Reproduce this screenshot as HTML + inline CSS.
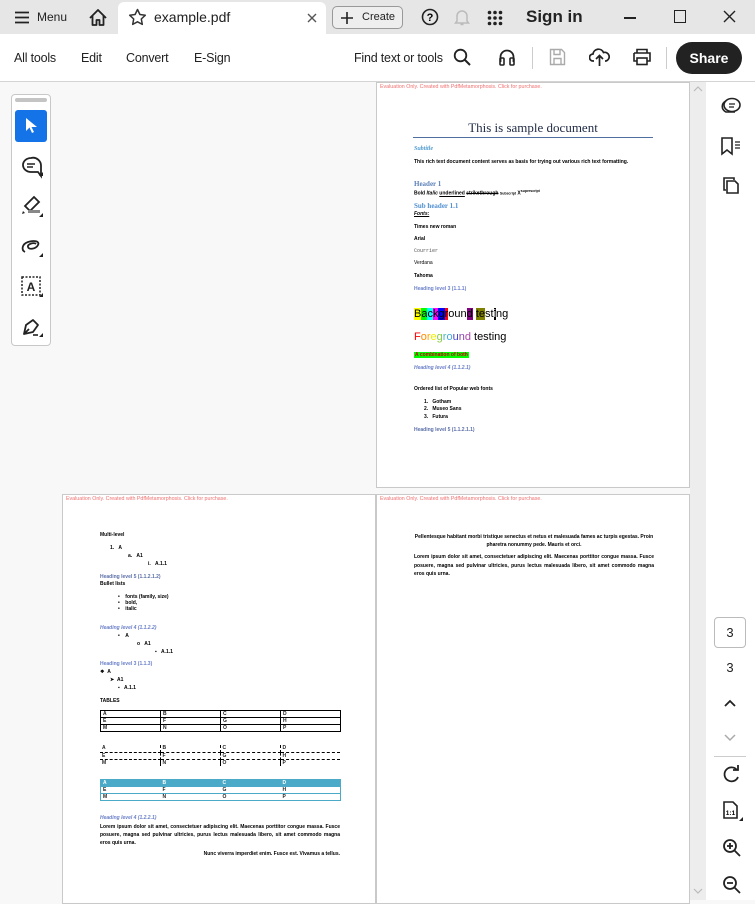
<!DOCTYPE html>
<html><head><meta charset="utf-8"><style>
*{margin:0;padding:0;box-sizing:border-box}
body{width:755px;height:900px;overflow:hidden;position:relative;background:#f8f8f8;font-family:"Liberation Sans",sans-serif;color:#222}
.a{position:absolute;white-space:nowrap}
.top{position:absolute;left:0;top:0;width:755px;height:34px;background:#e6e6e6}
.tab{position:absolute;left:118px;top:2px;width:208px;height:32px;background:#fff;border-radius:6px 6px 0 0}
.bar{position:absolute;left:0;top:34px;width:755px;height:48px;background:#fff;border-bottom:1px solid #d4d4d4}
.t15{font-size:12.5px;color:#222;letter-spacing:-0.2px}
.page{position:absolute;background:#fff;border:1px solid #c9c9c9;overflow:hidden}
.ev{position:absolute;left:3px;top:1px;font-size:5.3px;color:#f07070;white-space:nowrap}
.d{position:absolute;white-space:nowrap;font-size:5px;color:#000;font-weight:bold}
.h{color:#5b7fb8;font-family:"Liberation Serif",serif;font-weight:bold}
.hi{color:#6a7fc8;font-style:italic;font-weight:bold}
.rp{position:absolute;left:706px;top:82px;width:49px;height:818px;background:#fff}
.sb{position:absolute;left:690px;top:82px;width:16px;height:818px;background:#ededed}
table{border-collapse:collapse;position:absolute;font-size:5px;font-weight:bold}
td{width:60px;height:7px;padding:0 2px;line-height:6px}
</style></head><body>
<div class="top"></div>
<div class="tab"></div>
<svg class="a" style="left:14px;top:11px" width="16" height="13"><path d="M1 1.5h14M1 6.5h14M1 11.5h14" stroke="#222" stroke-width="1.8"/></svg>
<div class="a" style="left:37px;top:10px;font-size:12px">Menu</div>
<svg class="a" style="left:88px;top:8px" width="20" height="19"><path d="M2 10L10 2l8 8M4.5 8v9h4v-5h3v5h4V8" fill="none" stroke="#222" stroke-width="1.8" stroke-linejoin="round"/></svg>
<svg class="a" style="left:128px;top:8px" width="19" height="18"><path d="M9.5 1.5l2.4 5 5.4.7-4 3.8 1 5.4-4.8-2.6-4.8 2.6 1-5.4-4-3.8 5.4-.7z" fill="none" stroke="#333" stroke-width="1.5" stroke-linejoin="round"/></svg>
<div class="a" style="left:154px;top:9px;font-size:14px">example.pdf</div>
<svg class="a" style="left:307px;top:13px" width="10" height="10"><path d="M1 1l8 8M9 1l-8 8" stroke="#555" stroke-width="1.4"/></svg>
<div class="a" style="left:332px;top:6px;width:71px;height:23px;border:1px solid #999;border-radius:5px;background:#eee"></div>
<svg class="a" style="left:341px;top:12px" width="12" height="12"><path d="M6 0v12M0 6h12" stroke="#222" stroke-width="1.6"/></svg>
<div class="a" style="left:362px;top:11px;font-size:11px">Create</div>
<svg class="a" style="left:421px;top:8px" width="18" height="18"><circle cx="9" cy="9" r="7.5" fill="none" stroke="#222" stroke-width="1.6"/><text x="9" y="13" font-size="11" font-weight="bold" text-anchor="middle" font-family="Liberation Sans">?</text></svg>
<svg class="a" style="left:454px;top:8px" width="16" height="19"><path d="M3 13V8a5 5 0 0110 0v5l1.5 2h-13zM6.5 16.5h3" fill="none" stroke="#bbb" stroke-width="1.5"/></svg>
<svg class="a" style="left:487px;top:10px" width="16" height="16" fill="#222"><circle cx="2.5" cy="2.5" r="1.8"/><circle cx="8" cy="2.5" r="1.8"/><circle cx="13.5" cy="2.5" r="1.8"/><circle cx="2.5" cy="8" r="1.8"/><circle cx="8" cy="8" r="1.8"/><circle cx="13.5" cy="8" r="1.8"/><circle cx="2.5" cy="13.5" r="1.8"/><circle cx="8" cy="13.5" r="1.8"/><circle cx="13.5" cy="13.5" r="1.8"/></svg>
<div class="a" style="left:526px;top:7px;font-size:17px;font-weight:bold">Sign in</div>
<div class="a" style="left:624px;top:17px;width:12px;height:2px;background:#222"></div>
<div class="a" style="left:674px;top:10px;width:12px;height:13px;border:1.5px solid #222"></div>
<svg class="a" style="left:723px;top:10px" width="13" height="13"><path d="M1 1l11 11M12 1L1 12" stroke="#222" stroke-width="1.4"/></svg>
<div class="bar"></div>
<div class="a t15" style="left:14px;top:51px">All tools</div>
<div class="a t15" style="left:81px;top:51px">Edit</div>
<div class="a t15" style="left:126px;top:51px">Convert</div>
<div class="a t15" style="left:194px;top:51px">E-Sign</div>
<div class="a t15" style="left:354px;top:51px">Find text or tools</div>
<svg class="a" style="left:453px;top:48px" width="18" height="18"><circle cx="7.5" cy="7.5" r="5.8" fill="none" stroke="#222" stroke-width="1.8"/><path d="M12 12l5 5" stroke="#222" stroke-width="2"/></svg>
<svg class="a" style="left:498px;top:48px" width="18" height="18"><path d="M2.5 14V9a6.5 6.5 0 0113 0v5" fill="none" stroke="#222" stroke-width="1.8"/><rect x="2" y="10" width="4" height="7" rx="1" fill="none" stroke="#222" stroke-width="1.6"/><rect x="12" y="10" width="4" height="7" rx="1" fill="none" stroke="#222" stroke-width="1.6"/></svg>
<div class="a" style="left:532px;top:47px;width:1px;height:22px;background:#ccc"></div>
<svg class="a" style="left:549px;top:48px" width="17" height="18"><path d="M1.5 1.5h11l3 3v12h-14z M5 1.5v5h6v-5M5 16.5v-6h7v6" fill="none" stroke="#aaa" stroke-width="1.4"/></svg>
<svg class="a" style="left:589px;top:47px" width="21" height="20"><path d="M5 14H4a3.5 3.5 0 010-7 5.5 5.5 0 0110.5-1.5A4 4 0 0117 14h-1" fill="none" stroke="#222" stroke-width="1.7"/><path d="M10.5 19V9M7 12l3.5-3.5L14 12" fill="none" stroke="#222" stroke-width="1.7"/></svg>
<svg class="a" style="left:632px;top:48px" width="20" height="18"><path d="M5 5V1.5h10V5M2 5h16v8h-3M5 13H2V5" fill="none" stroke="#222" stroke-width="1.6"/><rect x="5" y="10" width="10" height="6.5" fill="none" stroke="#222" stroke-width="1.6"/></svg>
<div class="a" style="left:666px;top:47px;width:1px;height:22px;background:#ccc"></div>
<div class="a" style="left:676px;top:42px;width:66px;height:32px;border-radius:16px;background:#222;color:#fff;font-size:14px;font-weight:bold;text-align:center;line-height:32px">Share</div>

<div class="a" style="left:11px;top:94px;width:40px;height:252px;border:1px solid #c8c8c8;border-radius:4px;background:#fff"></div>
<div class="a" style="left:15px;top:98px;width:32px;height:4px;border-radius:2px;background:#c4c4c4"></div>
<div class="a" style="left:15px;top:110px;width:32px;height:32px;border-radius:3px;background:#1473e6"></div>
<svg class="a" style="left:25px;top:117px" width="14" height="18"><path d="M1 1v13l3.5-3.5 2.5 5.5 2-1-2.5-5H12z" fill="#fff"/></svg>
<svg class="a" style="left:20px;top:155px" width="24" height="24"><path d="M11 3a8 7 0 100 14h7l3 4v-10A8 8 0 0011 3z" fill="none" stroke="#222" stroke-width="1.8"/><path d="M7 9h8M7 12h6" stroke="#222" stroke-width="1.6"/><path d="M19 21l4-4v4z" fill="#222"/></svg>
<svg class="a" style="left:20px;top:195px" width="24" height="24"><path d="M14 2l5 5-9 9-5-5z" fill="none" stroke="#222" stroke-width="1.8"/><path d="M3 16l2 2-3 1z" fill="#222"/><rect x="8" y="15" width="12" height="3" fill="#888"/><path d="M19 22l4-4v4z" fill="#222"/></svg>
<svg class="a" style="left:20px;top:235px" width="24" height="24"><path d="M5 17c-4-2-3-8 3-10s12-1 10 3-9 5-10 2 6-5 8-3" fill="none" stroke="#222" stroke-width="1.8"/><path d="M19 22l4-4v4z" fill="#222"/></svg>
<svg class="a" style="left:20px;top:275px" width="24" height="24"><rect x="2" y="2" width="18" height="18" fill="none" stroke="#222" stroke-width="1.5" stroke-dasharray="2 1.5"/><text x="11" y="16" font-size="12" font-weight="bold" text-anchor="middle" font-family="Liberation Sans" fill="#222">A</text><path d="M19 22l4-4v4z" fill="#222"/></svg>
<svg class="a" style="left:20px;top:315px" width="24" height="24"><path d="M4 19l2-9 7-5 5 5-5 7z M4 19l5-5" fill="none" stroke="#222" stroke-width="1.8" stroke-linejoin="round"/><path d="M13 20h5" stroke="#222" stroke-width="1.6"/><path d="M19 22l4-4v4z" fill="#222"/></svg>

<div class="sb"></div>
<svg class="a" style="left:693px;top:86px" width="10" height="6"><path d="M1 5l4-4 4 4" fill="none" stroke="#bbb" stroke-width="1.2"/></svg>
<svg class="a" style="left:693px;top:888px" width="10" height="6"><path d="M1 1l4 4 4-4" fill="none" stroke="#bbb" stroke-width="1.2"/></svg>
<div class="rp"></div>
<svg class="a" style="left:720px;top:97px" width="22" height="18"><ellipse cx="12" cy="8" rx="8" ry="6.5" fill="none" stroke="#222" stroke-width="1.6"/><path d="M6 4a8 6.5 0 000 11h9" fill="none" stroke="#222" stroke-width="1.6"/><path d="M9 7h6M9 10h5" stroke="#222" stroke-width="1.3"/></svg>
<svg class="a" style="left:720px;top:136px" width="22" height="20"><path d="M2 2h10v16l-5-4-5 4z" fill="none" stroke="#222" stroke-width="1.6"/><path d="M15 6h5M15 9h5M15 12h5" stroke="#222" stroke-width="1.2"/></svg>
<svg class="a" style="left:721px;top:175px" width="20" height="20"><path d="M5 15H3V3h10v2" fill="none" stroke="#222" stroke-width="1.6"/><path d="M6 6h8l3 3v9H6z" fill="none" stroke="#222" stroke-width="1.6"/></svg>
<div class="a" style="left:714px;top:617px;width:32px;height:31px;border:1px solid #bbb;border-radius:4px;font-size:13px;text-align:center;line-height:29px">3</div>
<div class="a" style="left:714px;top:660px;width:32px;font-size:13px;text-align:center">3</div>
<svg class="a" style="left:724px;top:699px" width="12" height="8"><path d="M1 7l5-5 5 5" fill="none" stroke="#222" stroke-width="1.8"/></svg>
<svg class="a" style="left:724px;top:734px" width="12" height="8"><path d="M1 1l5 5 5-5" fill="none" stroke="#aaa" stroke-width="1.5"/></svg>
<div class="a" style="left:714px;top:756px;width:32px;height:1px;background:#ccc"></div>
<svg class="a" style="left:721px;top:765px" width="20" height="20"><path d="M16 5A7 7 0 1017 12" fill="none" stroke="#222" stroke-width="1.8"/><path d="M12 5h5V0" fill="none" stroke="#222" stroke-width="1.8"/></svg>
<svg class="a" style="left:722px;top:800px" width="22" height="22"><path d="M2 2h9l4 4v12H2z" fill="none" stroke="#222" stroke-width="1.6"/><text x="8.5" y="15" font-size="6.5" font-weight="bold" text-anchor="middle" font-family="Liberation Sans">1:1</text><path d="M17 21l4-4v4z" fill="#222"/></svg>
<svg class="a" style="left:722px;top:838px" width="20" height="20"><circle cx="8" cy="8" r="6" fill="none" stroke="#222" stroke-width="1.8"/><path d="M12.5 12.5l5.5 5.5M5 8h6M8 5v6" stroke="#222" stroke-width="1.8"/></svg>
<svg class="a" style="left:722px;top:875px" width="20" height="20"><circle cx="8" cy="8" r="6" fill="none" stroke="#222" stroke-width="1.8"/><path d="M12.5 12.5l5.5 5.5M5 8h6" stroke="#222" stroke-width="1.8"/></svg>

<div class="page" style="left:376px;top:82px;width:314px;height:406px">
<div class="ev">Evaluation Only. Created with PdfMetamorphosis. Click for purchase.</div>
<div class="d" style="left:36px;top:37px;width:240px;text-align:center;font-family:'Liberation Serif',serif;font-weight:normal;font-size:13px;color:#1f2a44">This is sample document</div>
<div class="a" style="left:36px;top:54px;width:240px;height:1px;background:#4f6fa0"></div>
<div class="d hi" style="left:37px;top:63px;font-family:'Liberation Serif',serif;color:#4f9bd0;font-size:6px">Subtitle</div>
<div class="d" style="left:37px;top:76px">This rich text document content serves as basis for trying out various rich text formatting.</div>
<div class="d h" style="left:37px;top:97px;font-size:7px">Header 1</div>
<div class="d" style="left:37px;top:106px">Bold <i>Italic</i> <u>underlined</u> <s>strikethrough</s> <span style="font-size:3.5px">Subscript</span> X<sup style="font-size:3.5px">superscript</sup></div>
<div class="d h" style="left:37px;top:119px;font-size:7px;color:#4f8fd0">Sub header 1.1</div>
<div class="d" style="left:37px;top:128px"><i><u>Fonts:</u></i></div>
<div class="d" style="left:37px;top:141px">Times new roman</div>
<div class="d" style="left:37px;top:153px">Arial</div>
<div class="d" style="left:37px;top:165px;font-family:'Liberation Mono',monospace;font-weight:normal;color:#555">Courrier</div>
<div class="d" style="left:37px;top:177px;font-weight:normal">Verdana</div>
<div class="d" style="left:37px;top:190px">Tahoma</div>
<div class="d" style="left:37px;top:203px;color:#6a7fc8">Heading level 3 (1.1.1)</div>
<div class="d" style="left:37px;top:225px;font-size:11px;font-weight:normal;line-height:13px"><span style="background:#ff0">B</span><span style="background:#0f0">a</span><span style="background:#0ff">c</span><span style="background:#f0f">k</span><span style="background:#00f">g</span><span style="background:#f00">r</span>oun<span style="background:#800080">d</span> <span style="background:#808000">te</span>st<span style="background:#000;color:#fff">i</span>ng</div>
<div class="d" style="left:37px;top:248px;font-size:11px;font-weight:normal"><span style="color:#f00">F</span><span style="color:#f80">o</span><span style="color:#fa0">r</span><span style="color:#ee0">e</span><span style="color:#8c4">g</span><span style="color:#4bb">r</span><span style="color:#4ad">o</span><span style="color:#44c">u</span><span style="color:#84a">n</span><span style="color:#a4a">d</span> testing</div>
<div class="d" style="left:37px;top:269px;background:#0f0;color:#c00;padding:0 1px">A combination of both</div>
<div class="d hi" style="left:37px;top:282px">Heading level 4 (1.1.2.1)</div>
<div class="d" style="left:37px;top:303px">Ordered list of Popular web fonts</div>
<div class="d" style="left:47px;top:316px">1.&nbsp;&nbsp;&nbsp;Gotham</div>
<div class="d" style="left:47px;top:323px">2.&nbsp;&nbsp;&nbsp;Museo Sans</div>
<div class="d" style="left:47px;top:331px">3.&nbsp;&nbsp;&nbsp;Futura</div>
<div class="d" style="left:37px;top:344px;color:#5b6fa8">Heading level 5 (1.1.2.1.1)</div>
</div>

<div class="page" style="left:62px;top:494px;width:314px;height:410px">
<div class="ev">Evaluation Only. Created with PdfMetamorphosis. Click for purchase.</div>
<div class="d" style="left:37px;top:37px">Multi-level</div>
<div class="d" style="left:47px;top:50px">1.&nbsp;&nbsp;&nbsp;A</div>
<div class="d" style="left:65px;top:58px">a.&nbsp;&nbsp;&nbsp;A1</div>
<div class="d" style="left:85px;top:66px">i.&nbsp;&nbsp;&nbsp;A.1.1</div>
<div class="d" style="left:37px;top:79px;color:#5b6fa8">Heading level 5 (1.1.2.1.2)</div>
<div class="d" style="left:37px;top:86px">Bullet lists</div>
<div class="d" style="left:55px;top:99px">•&nbsp;&nbsp;&nbsp;&nbsp;fonts (family, size)</div>
<div class="d" style="left:55px;top:105px">•&nbsp;&nbsp;&nbsp;&nbsp;bold,</div>
<div class="d" style="left:55px;top:111px">•&nbsp;&nbsp;&nbsp;&nbsp;italic</div>
<div class="d hi" style="left:37px;top:130px">Heading level 4 (1.1.2.2)</div>
<div class="d" style="left:55px;top:138px">•&nbsp;&nbsp;&nbsp;&nbsp;A</div>
<div class="d" style="left:74px;top:146px">o&nbsp;&nbsp;&nbsp;A1</div>
<div class="d" style="left:92px;top:154px">▪&nbsp;&nbsp;&nbsp;A.1.1</div>
<div class="d" style="left:37px;top:166px;color:#6a7fc8">Heading level 3 (1.1.3)</div>
<div class="d" style="left:37px;top:174px">❖&nbsp;&nbsp;A</div>
<div class="d" style="left:47px;top:182px">➤&nbsp;&nbsp;A1</div>
<div class="d" style="left:55px;top:190px">▪&nbsp;&nbsp;&nbsp;A.1.1</div>
<div class="d" style="left:37px;top:203px">TABLES</div>
<table style="left:37px;top:215px;border:1px solid #000"><tr><td style="border:1px solid #000">A</td><td style="border:1px solid #000">B</td><td style="border:1px solid #000">C</td><td style="border:1px solid #000">D</td></tr><tr><td style="border:1px solid #000">E</td><td style="border:1px solid #000">F</td><td style="border:1px solid #000">G</td><td style="border:1px solid #000">H</td></tr><tr><td style="border:1px solid #000">M</td><td style="border:1px solid #000">N</td><td style="border:1px solid #000">O</td><td style="border:1px solid #000">P</td></tr></table>
<table style="left:37px;top:250px"><tr><td style="border-right:1px dashed #000;border-bottom:1px dashed #000">A</td><td style="border-right:1px dashed #000;border-bottom:1px dashed #000">B</td><td style="border-right:1px dashed #000;border-bottom:1px dashed #000">C</td><td style="border-bottom:1px dashed #000">D</td></tr><tr><td style="border-right:1px dashed #000;border-bottom:1px dashed #000">E</td><td style="border-right:1px dashed #000;border-bottom:1px dashed #000">F</td><td style="border-right:1px dashed #000;border-bottom:1px dashed #000">G</td><td style="border-bottom:1px dashed #000">H</td></tr><tr><td style="border-right:1px dashed #000">M</td><td style="border-right:1px dashed #000">N</td><td style="border-right:1px dashed #000">O</td><td>P</td></tr></table>
<table style="left:37px;top:284px;border:1px solid #4aaac8"><tr style="background:#4aaac8;color:#fff"><td>A</td><td>B</td><td>C</td><td>D</td></tr><tr><td style="border-bottom:1px solid #4aaac8">E</td><td style="border-bottom:1px solid #4aaac8">F</td><td style="border-bottom:1px solid #4aaac8">G</td><td style="border-bottom:1px solid #4aaac8">H</td></tr><tr><td>M</td><td>N</td><td>O</td><td>P</td></tr></table>
<div class="d hi" style="left:37px;top:320px">Heading level 4 (1.2.2.1)</div>
<div class="d" style="left:37px;top:328px;line-height:8px;white-space:normal;width:240px;text-align:justify">Lorem ipsum dolor sit amet, consectetuer adipiscing elit. Maecenas porttitor congue massa. Fusce posuere, magna sed pulvinar ultricies, purus lectus malesuada libero, sit amet commodo magna eros quis urna.</div>
<div class="d" style="left:37px;top:356px;width:240px;text-align:right">Nunc viverra imperdiet enim. Fusce est. Vivamus a tellus.</div>
</div>

<div class="page" style="left:376px;top:494px;width:314px;height:410px">
<div class="ev">Evaluation Only. Created with PdfMetamorphosis. Click for purchase.</div>
<div class="d" style="left:37px;top:38px;width:240px;text-align:center;line-height:8px;white-space:normal">Pellentesque habitant morbi tristique senectus et netus et malesuada fames ac turpis egestas. Proin pharetra nonummy pede. Mauris et orci.</div>
<div class="d" style="left:37px;top:58px;width:240px;line-height:8.5px;white-space:normal;text-align:justify">Lorem ipsum dolor sit amet, consectetuer adipiscing elit. Maecenas porttitor congue massa. Fusce posuere, magna sed pulvinar ultricies, purus lectus malesuada libero, sit amet commodo magna eros quis urna.</div>
</div>
</body></html>
